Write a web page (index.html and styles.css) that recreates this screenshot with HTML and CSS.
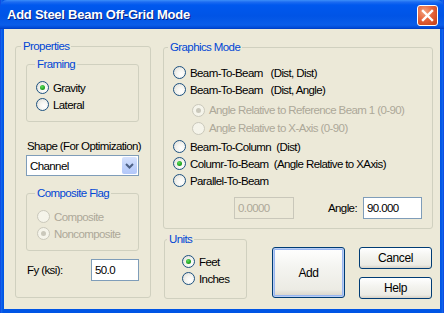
FILE: index.html
```html
<!DOCTYPE html>
<html lang="en">
<head>
    <meta charset="UTF-8">
    <title>Add Steel Beam Off-Grid Mode</title>
    <link rel="stylesheet" href="styles.css">
</head>
<body>

    <div class="window">
        <div class="titlebar">
            <span class="title">Add Steel Beam Off-Grid Mode</span>
            <button class="close-btn" aria-label="Close">
                <svg width="13" height="13" viewBox="0 0 13 13">
                    <path d="M2 2 L11 11 M11 2 L2 11" stroke="#fff" stroke-width="2.4" stroke-linecap="square"/>
                </svg>
            </button>
        </div>

        <div class="client">
            <!-- left column -->
            <fieldset class="group properties">
                <legend>Properties</legend>

                <fieldset class="group framing">
                    <legend>Framing</legend>
                    <label class="option"><span class="radio checked"></span>Gravity</label>
                    <label class="option"><span class="radio"></span>Lateral</label>
                </fieldset>

                <div class="shape-label">Shape (For Optimization)</div>
                <div class="combo">
                    <span class="combo-text">Channel</span>
                    <span class="combo-btn">
                        <svg width="9" height="6" viewBox="0 0 9 6">
                            <path d="M1 1 L4.5 4.5 L8 1" fill="none" stroke="#4d6185" stroke-width="2"/>
                        </svg>
                    </span>
                </div>

                <fieldset class="group composite">
                    <legend>Composite Flag</legend>
                    <label class="option disabled"><span class="radio"></span>Composite</label>
                    <label class="option disabled"><span class="radio checked"></span>Noncomposite</label>
                </fieldset>

                <div class="fy-row">
                    <span class="fy-label">Fy (ksi):</span>
                    <span class="textbox fy-input">50.0</span>
                </div>
            </fieldset>

            <!-- right column -->
            <div class="right-col">
                <fieldset class="group graphics">
                    <legend>Graphics Mode</legend>
                    <label class="option"><span class="radio"></span>Beam-To-Beam&nbsp;&nbsp;&nbsp;(Dist, Dist)</label>
                    <label class="option"><span class="radio"></span>Beam-To-Beam&nbsp;&nbsp;&nbsp;(Dist, Angle)</label>
                    <label class="option sub first-sub disabled"><span class="radio checked"></span>Angle Relative to Reference Beam 1 (0-90)</label>
                    <label class="option sub disabled"><span class="radio"></span>Angle Relative to X-Axis (0-90)</label>
                    <label class="option after-sub"><span class="radio"></span>Beam-To-Column&nbsp;&nbsp;(Dist)</label>
                    <label class="option"><span class="radio checked"></span>Columr-To-Beam&nbsp;&nbsp;(Angle Relative to XAxis)</label>
                    <label class="option"><span class="radio"></span>Parallel-To-Beam</label>
                    <div class="value-row">
                        <span class="textbox dist-input disabled">0.0000</span>
                        <span class="angle-label">Angle:</span>
                        <span class="textbox angle-input">90.000</span>
                    </div>
                </fieldset>

                <div class="bottom-row">
                    <fieldset class="group units">
                        <legend>Units</legend>
                        <label class="option"><span class="radio checked"></span>Feet</label>
                        <label class="option"><span class="radio"></span>Inches</label>
                    </fieldset>

                    <button class="btn btn-default">Add</button>

                    <div class="btn-stack">
                        <button class="btn">Cancel</button>
                        <button class="btn">Help</button>
                    </div>
                </div>
            </div>
        </div>
    </div>

</body>
</html>
```

FILE: styles.css
```css
html, body {
    margin: 0;
    padding: 0;
}

body {
    width: 444px;
    height: 313px;
    overflow: hidden;
    font-family: 'Liberation Sans', Arial, sans-serif;
    font-size: 11.5px;
    letter-spacing: -0.6px;
    color: #000;
}

.window {
    width: 444px;
    height: 313px;
    background: linear-gradient(to right, #0831d9 0, #166aee 1px, #0055e5 3px, #0055e5 441px, #166aee 443px, #0831d9 444px);
    box-sizing: border-box;
    display: flex;
    flex-direction: column;
}

/* title bar */
.titlebar {
    height: 29px;
    flex: none;
    display: flex;
    align-items: center;
    justify-content: space-between;
    padding: 0 6px 0 7px;
    border-radius: 7px 7px 0 0;
    background: linear-gradient(to bottom, #3d8ff9 0, #1d6cf1 2px, #0058ee 5px, #0054e6 16px, #0a5de9 25px, #0048d5 28px, #003bbd 29px);
}

.title {
    font-family: 'Liberation Sans', sans-serif;
    font-weight: bold;
    font-size: 13px;
    color: #fff;
    text-shadow: 1px 1px 0 #0a1e78;
    letter-spacing: -0.25px;
}

.close-btn {
    width: 21px;
    height: 21px;
    padding: 0;
    margin-top: 1px;
    border: 1px solid #fff;
    border-radius: 3px;
    background: radial-gradient(circle at 35% 30%, #f2a37f 0, #e6643c 45%, #d04a20 80%, #c2401a 100%);
    display: flex;
    align-items: center;
    justify-content: center;
}

/* client area */
.client {
    flex: 1;
    margin: 0 4px 4px;
    background-color: #ece9d8;
    display: flex;
    align-items: flex-start;
}

.group {
    box-sizing: border-box;
    margin: 0;
    min-inline-size: 0;
    border: 1px solid #d0d0bf;
    border-radius: 3px;
    padding: 0;
}

.group legend {
    padding: 0 2px;
    line-height: 14px;
    color: #0046d5;
}

.option {
    display: flex;
    align-items: center;
    height: 17px;
    white-space: nowrap;
}

.option.disabled {
    color: #aca899;
}

.radio {
    position: relative;
    flex: none;
    width: 11px;
    height: 11px;
    margin-right: 4px;
    border: 1px solid #1c5180;
    border-radius: 50%;
    background: radial-gradient(circle at 65% 65%, #fff 0, #f5f5f1 40%, #dcdad2 100%);
}

.radio.checked::after {
    content: '';
    position: absolute;
    left: 3px;
    top: 3px;
    width: 5px;
    height: 5px;
    border-radius: 50%;
    background: radial-gradient(circle at 40% 35%, #5ee05e 0, #21a121 60%, #1a8a1a 100%);
}

.disabled .radio {
    border-color: #cac8bb;
    background: #f5f4ea;
}

.disabled .radio.checked::after {
    background: #cac8bb;
}

.textbox {
    box-sizing: border-box;
    display: flex;
    align-items: center;
    height: 22px;
    padding: 0 4px 0 3px;
    border: 1px solid #7f9db9;
    background-color: #fff;
}

.textbox.disabled {
    border-color: #c9c7ba;
    background-color: #ece9d8;
    color: #aca899;
}

/* properties column */
.properties {
    width: 136px;
    height: 259px;
    margin: 10px 0 0 11px;
}

.properties > legend {
    margin-left: 5px;
}

.framing,
.composite {
    width: 113px;
    height: 65px;
    margin: 4px 0 0 10px;
    padding: 8px 0 0 9px;
}

.framing legend,
.composite legend {
    margin-left: -1px;
}

.composite {
    margin-top: 10px;
}

.composite .option {
    padding-left: 1px;
}

.shape-label {
    margin: 17px 0 0 11px;
    line-height: 15px;
    height: 15px;
    white-space: nowrap;
}

.combo {
    box-sizing: border-box;
    width: 113px;
    height: 21px;
    margin: 1px 0 0 10px;
    border: 1px solid #7f9db9;
    background-color: #fff;
    display: flex;
    align-items: center;
    justify-content: space-between;
}

.combo-text {
    padding-left: 3px;
}

.combo-btn {
    width: 15px;
    height: 17px;
    margin-right: 1px;
    border-radius: 2px;
    background: linear-gradient(to bottom, #d6e2fd 0, #c1d3fb 50%, #b2c7f9 100%);
    display: flex;
    align-items: center;
    justify-content: center;
}

.fy-row {
    display: flex;
    align-items: center;
    justify-content: space-between;
    width: 112px;
    margin: 8px 0 0 11px;
}

.fy-input {
    width: 48px;
}

/* right column */
.right-col {
    margin: 11px 0 0 12px;
    display: flex;
    flex-direction: column;
}

.graphics {
    width: 270px;
    height: 189px;
    padding: 10px 0 0 9px;
}

.graphics legend {
    margin-left: -5px;
}

.option.sub {
    height: 18px;
    padding-left: 19px;
}

.option.first-sub {
    margin-top: 3px;
}

.option.after-sub {
    margin-top: 1px;
}

.value-row {
    display: flex;
    align-items: center;
    margin: 8px 0 0 61px;
}

.dist-input {
    width: 60px;
}

.angle-label {
    margin-left: 34px;
}

.angle-input {
    width: 59px;
    margin-left: 6px;
}

.bottom-row {
    display: flex;
    align-items: flex-start;
    margin-top: 3px;
}

.units {
    width: 83px;
    height: 67px;
    margin-left: 1px;
    padding: 7px 0 0 17px;
}

.units legend {
    margin-left: -15px;
}

.btn {
    box-sizing: border-box;
    width: 73px;
    height: 22px;
    padding: 0;
    border: 1px solid #003c74;
    border-radius: 3px;
    background: linear-gradient(to bottom, #fff 0, #f4f4f0 40%, #ecebe4 85%, #d6d0c5 100%);
    font-family: inherit;
    font-size: 12px;
    letter-spacing: -0.4px;
    color: #000;
}

.btn-default {
    height: 51px;
    margin: 15px 0 0 25px;
    box-shadow: inset 0 0 0 1px #b8cdf4, inset 0 0 0 2px #99b6f0;
}

.btn-stack {
    display: flex;
    flex-direction: column;
    gap: 8px;
    margin: 15px 0 0 14px;
}
```
